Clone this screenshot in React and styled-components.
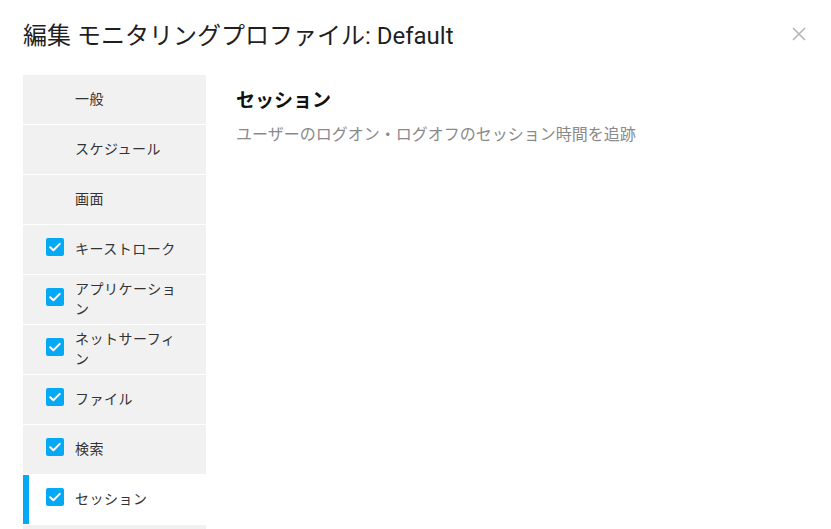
import React from 'react';
import styled, { createGlobalStyle } from 'styled-components';

const GlobalStyle = createGlobalStyle`
    html, body {
        margin: 0;
        padding: 0;
        background: #ffffff;
        overflow: hidden;
    }
    body {
        font-family: Roboto, "Noto Sans CJK JP", sans-serif;
        color: #222222;
    }
`;

const Page = styled.div`
    width: 831px;
    height: 529px;
    padding: 0 23px;
    box-sizing: border-box;
    overflow: hidden;
`;

const Header = styled.div`
    height: 75px;
    display: flex;
    align-items: center;
    justify-content: space-between;
`;

const Title = styled.h1`
    margin: 0 0 9px 0;
    font-size: 24px;
    font-weight: 400;
    color: #1f1f1f;
`;

const Close = styled.button`
    border: none;
    background: none;
    padding: 0;
    margin: 0 1px 7px 0;
    width: 16px;
    height: 16px;
    display: flex;
    align-items: center;
    justify-content: center;
    cursor: pointer;
`;

const Body = styled.div`
    display: flex;
`;

const Sidebar = styled.ul`
    list-style-type: none;
    margin: 0;
    padding: 0;
    width: 183px;
    min-height: 520px;
    background-color: #f1f1f1;
    flex-shrink: 0;
`;

const NavItem = styled.li`
    position: relative;
    height: 49px;
    border-bottom: 1px solid #ffffff;
    display: flex;
    align-items: center;
    padding: 0 24px 0 23px;
    background-color: ${p => (p.selected ? '#ffffff' : 'transparent')};
    font-size: 14px;
    line-height: 20px;
    letter-spacing: 0.5px;
    color: #333333;
    &::before {
        content: '';
        display: ${p => (p.selected ? 'block' : 'none')};
        position: absolute;
        left: 0;
        top: 0;
        bottom: 0;
        width: 6px;
        background-color: #03a9f4;
    }
`;

const CheckSlot = styled.span`
    width: 18px;
    height: 18px;
    margin: 0 11px 5px 0;
    flex-shrink: 0;
    display: flex;
`;

const Label = styled.span`
    flex: 1;
    margin-top: -1px;
`;

const Content = styled.div`
    flex: 1;
    padding: 14px 30px;
`;

const Heading = styled.h2`
    margin: 0;
    font-size: 19px;
    font-weight: 700;
    line-height: 24px;
    color: #111111;
`;

const Description = styled.p`
    margin: 11px 0 0 0;
    font-size: 16px;
    line-height: 22px;
    color: #8a8a8a;
`;

const CheckBox = () => (
    <svg width="18" height="18" viewBox="0 0 18 18">
        <rect x="0" y="0" width="18" height="18" rx="2" fill="#03a9f4" />
        <path d="M4.2 9.2 L7.4 12.3 L13.8 5.9" fill="none" stroke="#ffffff" strokeWidth="2" strokeLinecap="round" strokeLinejoin="round" />
    </svg>
);

const items = [
    { label: '一般', checked: false },
    { label: 'スケジュール', checked: false },
    { label: '画面', checked: false },
    { label: 'キーストローク', checked: true },
    { label: 'アプリケーション', checked: true },
    { label: 'ネットサーフィン', checked: true },
    { label: 'ファイル', checked: true },
    { label: '検索', checked: true },
    { label: 'セッション', checked: true, selected: true },
];

const App = () => {
    return (
        <Page>
            <GlobalStyle />
            <Header>
                <Title>編集 モニタリングプロファイル: Default</Title>
                <Close aria-label="close">
                    <svg width="14" height="14" viewBox="0 0 14 14">
                        <path d="M1 1 L13 13 M13 1 L1 13" stroke="#b5b5b5" strokeWidth="1.6" />
                    </svg>
                </Close>
            </Header>
            <Body>
                <Sidebar>
                    {items.map(item => (
                        <NavItem key={item.label} selected={item.selected}>
                            <CheckSlot>{item.checked && <CheckBox />}</CheckSlot>
                            <Label>{item.label}</Label>
                        </NavItem>
                    ))}
                </Sidebar>
                <Content>
                    <Heading>セッション</Heading>
                    <Description>ユーザーのログオン・ログオフのセッション時間を追跡</Description>
                </Content>
            </Body>
        </Page>
    );
};

export default App;
